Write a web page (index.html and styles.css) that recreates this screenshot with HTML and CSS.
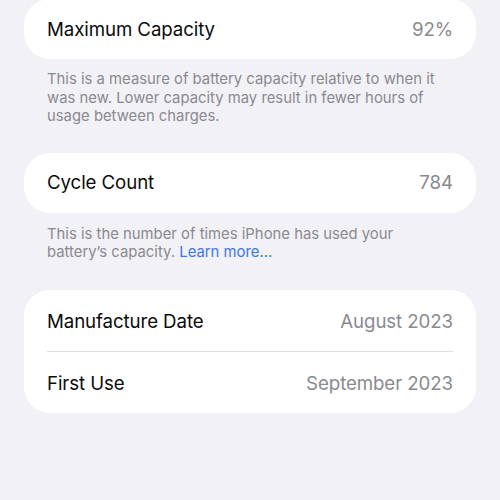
FILE: index.html
```html
<!DOCTYPE html>
<html>
<head>
<meta charset="utf-8">
<link rel="stylesheet" href="styles.css">
</head>
<body>
<main class="page">
  <section class="card card-first">
    <div class="row">
      <span class="label">Maximum Capacity</span>
      <span class="value">92%</span>
    </div>
  </section>
  <p class="note note-first">This is a measure of battery capacity relative to when it was new. Lower capacity may result in fewer hours of usage between charges.</p>

  <section class="card">
    <div class="row">
      <span class="label">Cycle Count</span>
      <span class="value">784</span>
    </div>
  </section>
  <p class="note note-second">This is the number of times iPhone has used your battery’s capacity. <a class="link" href="#">Learn more…</a></p>

  <section class="card">
    <div class="row row-tall">
      <span class="label">Manufacture Date</span>
      <span class="value">August 2023</span>
    </div>
    <div class="sep"></div>
    <div class="row row-tall">
      <span class="label">First Use</span>
      <span class="value">September 2023</span>
    </div>
  </section>
</main>
</body>
</html>
```

FILE: styles.css
```css
html, body {
  margin: 0;
  padding: 0;
  background: #f2f1f6;
}
body {
  font-family: Inter, "Noto Sans", "Liberation Sans", sans-serif;
  -webkit-font-smoothing: antialiased;
}
.page {
  display: flex;
  flex-direction: column;
  padding: 0 24px;
  margin-top: -1px;
}
.card {
  background: #ffffff;
  border-radius: 26px;
  padding: 0 23px;
  display: flex;
  flex-direction: column;
}
.row {
  height: 60px;
  display: flex;
  align-items: center;
  justify-content: space-between;
  font-size: 18.7px;
  letter-spacing: -0.1px;
}
.row-tall {
  box-sizing: border-box;
  height: 61px;
  padding-top: 2px;
}
.label {
  color: #0b0b0c;
}
.value {
  color: #8a8a8e;
}
.sep {
  height: 1px;
  background: #e2e2e6;
}
.note {
  margin: 0;
  padding: 11px 30px 0 23px;
  font-size: 14.85px;
  line-height: 18.5px;
  color: #8a898f;
}
.note-first {
  padding-bottom: 27px;
}
.note-second {
  padding-top: 12px;
  padding-bottom: 28px;
}
.link {
  color: #3a79e6;
  text-decoration: none;
}
```
